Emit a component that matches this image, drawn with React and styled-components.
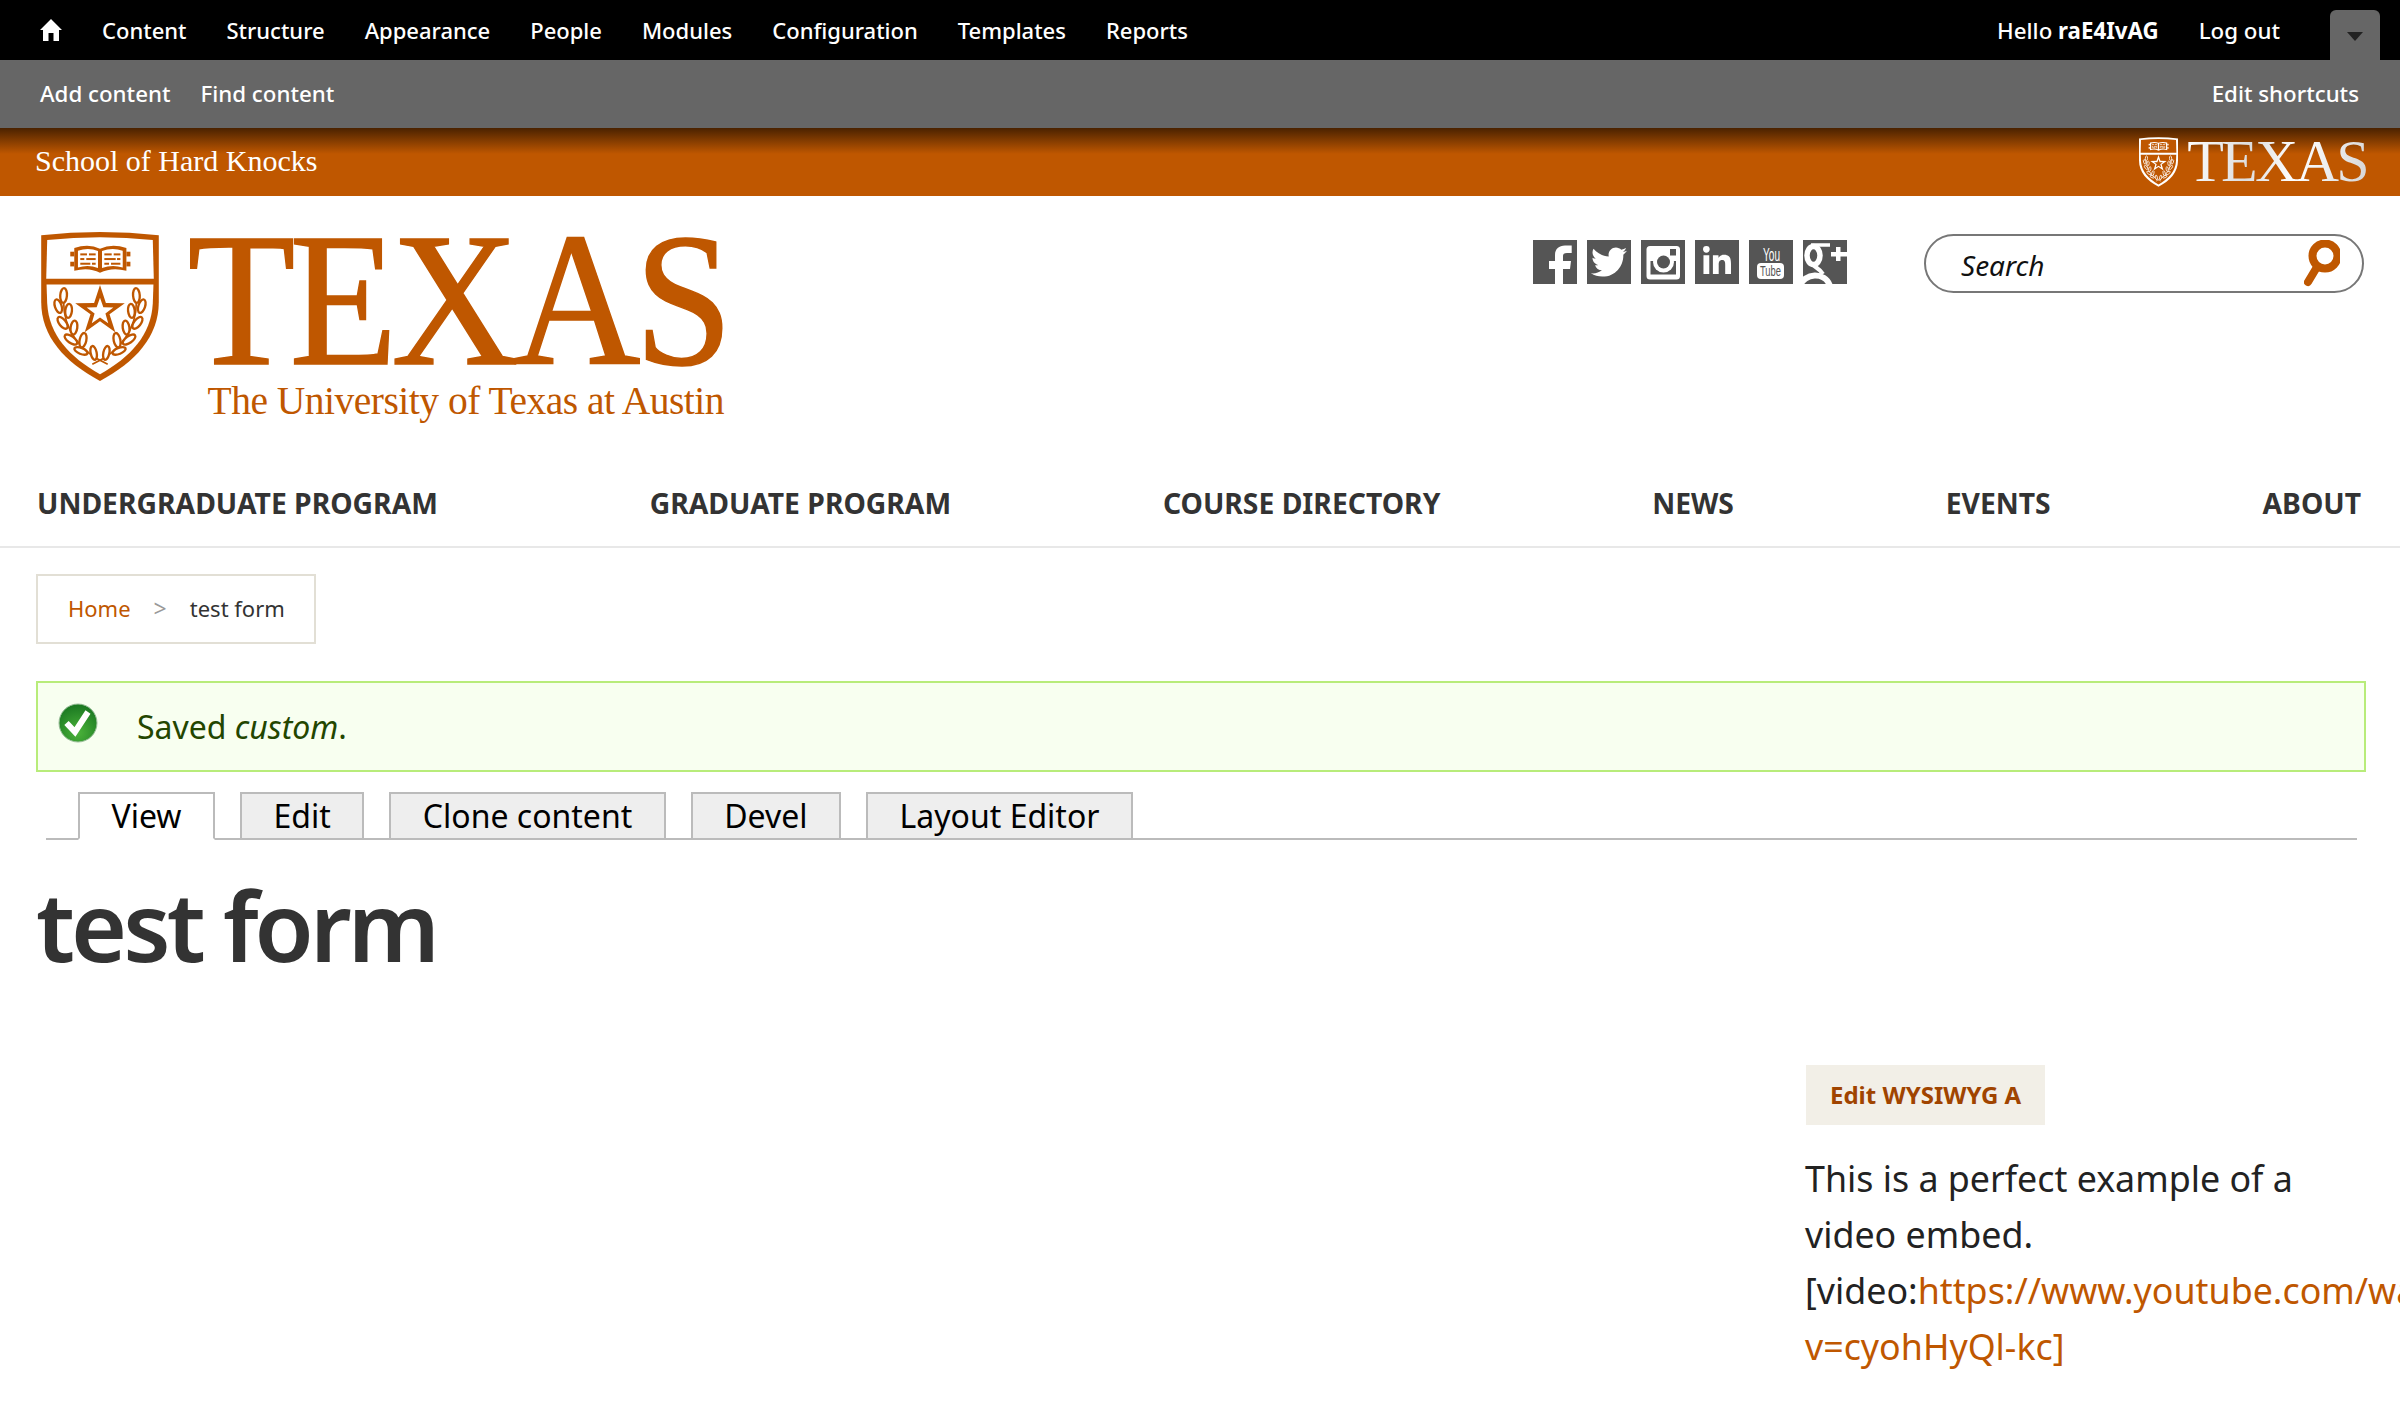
import React from "react";
import styled, { createGlobalStyle } from "styled-components";
import { FaTwitter, FaLinkedinIn } from "react-icons/fa";

const Global = createGlobalStyle`
  html, body { margin: 0; padding: 0; background: #fff; }
  body { font-family: "Noto Sans", "Open Sans", sans-serif; overflow-x: hidden; }
  * { box-sizing: border-box; }
  a { text-decoration: none; color: inherit; }
`;

const Page = styled.div`width: 2400px; height: 1416px; overflow: hidden; background: #fff;`;

const AdminBar = styled.div`
  height: 60px; background: #000; color: #fff; display: flex; align-items: center;
  padding-left: 40px; font-size: 22.3px; font-weight: 500;
`;
const HomeIcon = styled.svg`flex: none;`;
const MenuList = styled.nav`display: flex; align-items: center; gap: 40px; margin-left: 40px; font-size: 22px; padding-bottom: 1px;`;
const BarRight = styled.div`margin-left: auto; display: flex; align-items: center; height: 100%;`;
const Hello = styled.span`margin-right: 40px; b { font-weight: 700; }`;
const Handle = styled.div`
  width: 50px; height: 50px; margin: 10px 20px 0 50px; background: #666; border-radius: 6px 6px 0 0;
  display: flex; justify-content: center; padding-top: 22px;
  &::after { content: ""; border: 8px solid transparent; border-top: 9px solid #222; border-bottom: 0; height: 0; width: 0; }
`;
const ShortcutBar = styled.div`
  height: 68px; background: #666; color: #fff; display: flex; align-items: center; justify-content: space-between;
  padding: 0 41px 2px 40px; font-size: 22.3px; font-weight: 500;
`;
const ShortcutList = styled.div`display: flex; gap: 30px;`;
const BrandBar = styled.div`
  height: 68px; background: linear-gradient(180deg, #4a2200 0, #bf5700 26px); display: flex; align-items: center;
  justify-content: space-between; padding: 0 33px 3px 35px; color: #fff;
  font-family: "Liberation Serif", serif; font-size: 30px;
`;
const MiniLogo = styled.div`display: flex; align-items: center; gap: 9px; height: 100%; padding-top: 3px;`;
const MiniWord = styled.span`
  font-size: 60px; line-height: 1; letter-spacing: -2.7px; padding-bottom: 2px;
  background: linear-gradient(100deg, #fff 0, #ddd 35%, #fff 60%, #d5d5d5 100%);
  -webkit-background-clip: text; background-clip: text; color: transparent;
`;

const Masthead = styled.header`
  height: 252px; padding: 36px 36px 0 41px; display: flex; justify-content: space-between; align-items: flex-start;
`;
const Logo = styled.div`display: flex; gap: 30px; color: #bf5700; font-family: "Liberation Serif", serif;`;
const LogoText = styled.div`display: flex; flex-direction: column; align-items: flex-end; width: 537px;`;
const LogoWord = styled.div`
  font-size: 190px; line-height: 150px; height: 150px; letter-spacing: -6.5px; margin-top: -7px; margin-right: -1px; white-space: nowrap;
  -webkit-text-stroke: 1.5px #bf5700; transform: scaleX(0.93); transform-origin: right center;
`;
const LogoTag = styled.div`font-size: 39.5px; line-height: 40px; margin-top: 6px; margin-right: 2px; white-space: nowrap; letter-spacing: -0.5px;`;
const Tools = styled.div`display: flex; gap: 77px; align-items: flex-start; margin-top: 2px;`;
const SocialRow = styled.div`display: flex; gap: 10px; margin-top: 6px;`;
const SocialTile = styled.a`
  width: 44px; height: 44px; background: #555; color: #fff; display: flex; align-items: center; justify-content: center; overflow: hidden;
`;
const SearchBox = styled.div`
  width: 440px; height: 59px; border: 2px solid #777; border-radius: 30px; display: flex; align-items: center;
  justify-content: space-between; padding: 0 22px 0 35px; font-style: italic; font-size: 28px; color: #111; line-height: 60px;
  span { padding-top: 2px; }
`;

const MainNav = styled.nav`
  height: 100px; padding: 11px 39px 0 37px; display: flex; align-items: center; justify-content: space-between;
  border-bottom: 2px solid #e8e8e8; font-weight: 700; font-size: 28.3px; color: #333;
`;

const Content = styled.main`padding: 26px 34px 0 36px;`;
const Crumbs = styled.div`
  width: 280px; height: 70px; border: 2px solid #e2dfd5; display: flex; align-items: center; padding: 0 0 2px 30px; font-size: 22px; color: #333;
`;
const CrumbLink = styled.a`color: #bf5700;`;
const CrumbSep = styled.span`color: #999; margin: 0 23px 0 23px; font-size: 23px;`;
const Notice = styled.div`
  height: 91px; margin-top: 37px; background: #f8fff0; border: 2px solid #b8ec7a; display: flex; align-items: center;
  padding-left: 20px; gap: 39px; color: #234600; font-size: 32px;
`;
const NoticeIcon = styled.svg`flex: none; margin-bottom: 7px;`;
const TabRow = styled.div`
  margin: 20px 9px 0 10px; height: 48px; border-bottom: 2px solid #bbb; padding-left: 32px; display: flex; gap: 25px;
`;
const Tab = styled.a`
  height: 48px; padding: 0 31.5px; border: 2px solid #bbb; font-size: 32px; line-height: 44px; color: #000;
  background: ${(p) => (p.$active ? "#fff" : "#eee")};
  border-bottom-color: ${(p) => (p.$active ? "#fff" : "#bbb")};
`;
const Title = styled.h1`
  margin: 29px 0 0 0; font-size: 96px; line-height: 112px; font-weight: 600; color: #333; letter-spacing: -3.9px;
`;
const Lower = styled.div`display: flex; justify-content: flex-end; margin-top: 84px;`;
const Aside = styled.aside`width: 560px;`;
const EditButton = styled.a`
  display: inline-flex; align-items: center; height: 60px; padding: 0 24px 2px; background: #f2efe7; color: #a04400;
  font-weight: 700; font-size: 24px;
`;
const Body = styled.p`margin: 25px 0 0 -1px; font-size: 35.8px; line-height: 56px; color: #222; width: 560px;`;
const BodyLink = styled.a`color: #bf5700;`;

const ORANGE = "#bf5700";

function starPoints(cx, cy, R, r) {
  const pts = [];
  for (let i = 0; i < 10; i++) {
    const rad = i % 2 ? r : R;
    const a = (-90 + i * 36) * (Math.PI / 180);
    pts.push(`${(cx + rad * Math.cos(a)).toFixed(1)},${(cy + rad * Math.sin(a)).toFixed(1)}`);
  }
  return pts.join(" ");
}

const LEAVES = [
  [100, 226, 4, 10, 22], [84, 258, -18, 10, 21], [115, 272, 6, 10, 21], [97, 308, -38, 10, 21],
  [131, 322, 8, 10, 21], [122, 358, -55, 10, 22], [158, 360, 12, 10, 22], [152, 392, -68, 9, 21], [190, 398, -12, 9, 21],
];

function Shield({ color, bg, width, height }) {
  const leaves = (
    <g>
      <path d="M100 245 C100 330 150 395 232 432" fill="none" stroke={color} strokeWidth="5" />
      {LEAVES.map(([x, y, r, rx, ry], i) => (
        <ellipse key={i} cx={x} cy={y} rx={rx} ry={ry} transform={`rotate(${r} ${x} ${y})`} fill={bg} stroke={color} strokeWidth="7" />
      ))}
    </g>
  );
  return (
    <svg width={width} height={height} viewBox="33 36 352 446" aria-hidden="true">
      <path d="M33 46 Q209 26 385 46 L385 245 C385 350 315 425 209 482 C103 425 33 350 33 245 Z" fill={color} />
      <path d="M51 60 Q209 44 367 60 L370 176 L48 176 Z" fill={bg} />
      <path d="M49 193 L369 193 L367 250 C362 345 300 410 209 462 C118 410 56 345 51 250 Z" fill={bg} />
      <g fill={color}>
        <rect x="120" y="95" width="12" height="14" />
        <rect x="120" y="125" width="12" height="14" />
        <rect x="288" y="95" width="12" height="14" />
        <rect x="288" y="125" width="12" height="14" />
      </g>
      <path d="M132 84 Q175 70 209 86 Q245 70 288 84 L288 152 Q245 140 209 158 Q175 140 132 152 Z" fill={color} />
      <path d="M143 92 Q175 82 203 93 L203 144 Q175 132 143 142 Z" fill={bg} />
      <path d="M215 93 Q245 82 277 92 L277 142 Q245 132 215 144 Z" fill={bg} />
      <g fill={color}>
        <rect x="150" y="100" width="20" height="6" /><rect x="176" y="100" width="20" height="6" />
        <rect x="150" y="114" width="12" height="6" /><rect x="168" y="114" width="28" height="6" />
        <rect x="150" y="128" width="30" height="6" /><rect x="185" y="128" width="11" height="6" />
        <rect x="222" y="100" width="22" height="6" /><rect x="250" y="100" width="20" height="6" />
        <rect x="222" y="114" width="34" height="6" /><rect x="260" y="114" width="10" height="6" />
        <rect x="222" y="128" width="14" height="6" /><rect x="242" y="128" width="28" height="6" />
      </g>
      <polygon points={starPoints(209, 273, 78, 30)} fill={color} />
      <polygon points={starPoints(209, 275, 42, 17)} fill={bg} />
      {leaves}
      <g transform="translate(418 0) scale(-1 1)">{leaves}</g>
    </svg>
  );
}

const FacebookIcon = () => (
  <svg width="44" height="44" viewBox="0 0 44 44" aria-hidden="true">
    <path fill="#fff" d="M22 44 V29 H16 V21 H22 V15 C22 9 26 5.5 32 5.5 H38.7 V13 H34 C31 13 30 14 30 16 V21 H38 L37 29 H30 V44 Z" />
  </svg>
);
const InstagramIcon = () => (
  <svg width="44" height="44" viewBox="0 0 44 44" aria-hidden="true">
    <rect x="5.5" y="6" width="33.5" height="33.5" rx="3.5" fill="#fff" />
    <rect x="9.5" y="21" width="25.5" height="13.5" fill="#555" />
    <circle cx="22.5" cy="22" r="10.5" fill="#fff" />
    <circle cx="22.5" cy="22" r="6.5" fill="#555" />
    <rect x="29" y="9" width="6" height="6.5" fill="#555" />
  </svg>
);
const YouTubeIcon = () => (
  <svg width="44" height="44" viewBox="0 0 44 44" aria-hidden="true">
    <text x="22.5" y="21" textAnchor="middle" fontFamily="'Liberation Sans', sans-serif" fontSize="19" fontWeight="400" fill="#fff" textLength="17" lengthAdjust="spacingAndGlyphs">You</text>
    <rect x="8" y="23" width="27" height="16" rx="4" fill="#fff" />
    <text x="21.5" y="36" textAnchor="middle" fontFamily="'Liberation Sans', sans-serif" fontSize="15" fontWeight="400" fill="#555" textLength="21" lengthAdjust="spacingAndGlyphs">Tube</text>
  </svg>
);
const GooglePlusIcon = () => (
  <svg width="44" height="44" viewBox="0 0 44 44" aria-hidden="true">
    <g fill="none" stroke="#fff">
      <ellipse cx="10.5" cy="15.5" rx="6.5" ry="9" strokeWidth="5.5" />
      <path d="M8 5 H27" strokeWidth="3.5" />
      <path d="M10 25 C13 28 17 29 20 34" strokeWidth="4" />
      <path d="M-3 46 C1 33 22 31 27 46" strokeWidth="6" />
    </g>
    <path d="M33 7 H37.5 V12 H44 V16.5 H37.5 V21 H33 V16.5 H28 V12 H33 Z" fill="#fff" />
  </svg>
);
const SearchIcon = () => (
  <svg width="36" height="48" viewBox="0 0 36 48" aria-hidden="true">
    <circle cx="21" cy="16" r="12.5" fill="none" stroke={ORANGE} strokeWidth="8" />
    <line x1="13" y1="27" x2="4" y2="42" stroke={ORANGE} strokeWidth="8" strokeLinecap="round" />
  </svg>
);
const CheckIcon = () => (
  <NoticeIcon width="40" height="40" viewBox="0 0 40 40" aria-hidden="true">
    <defs>
      <radialGradient id="ok" cx="50%" cy="75%" r="70%">
        <stop offset="0" stopColor="#4bb33a" />
        <stop offset="1" stopColor="#1c7a22" />
      </radialGradient>
    </defs>
    <circle cx="20" cy="20" r="19" fill="url(#ok)" stroke="#9bbf9b" strokeWidth="1" />
    <path d="M8.5 20 L17 29 L30 9" fill="none" stroke="#fff" strokeWidth="6" />
  </NoticeIcon>
);

const TOP_MENU = ["Content", "Structure", "Appearance", "People", "Modules", "Configuration", "Templates", "Reports"];
const NAV = ["UNDERGRADUATE PROGRAM", "GRADUATE PROGRAM", "COURSE DIRECTORY", "NEWS", "EVENTS", "ABOUT"];
const TABS = ["View", "Edit", "Clone content", "Devel", "Layout Editor"];

export default function App() {
  return (
    <Page>
      <Global />
      <AdminBar>
        <HomeIcon width="22" height="22" viewBox="0 0 22 22" aria-hidden="true">
          <path fill="#fff" d="M11 0 L22 11 H19 V22 H13.5 V14 H8.5 V22 H3 V11 H0 Z" />
        </HomeIcon>
        <MenuList>{TOP_MENU.map((m) => <a key={m}>{m}</a>)}</MenuList>
        <BarRight>
          <Hello>Hello <b>raE4IvAG</b></Hello>
          <a>Log out</a>
          <Handle />
        </BarRight>
      </AdminBar>
      <ShortcutBar>
        <ShortcutList><a>Add content</a><a>Find content</a></ShortcutList>
        <a>Edit shortcuts</a>
      </ShortcutBar>
      <BrandBar>
        <span>School of Hard Knocks</span>
        <MiniLogo>
          <Shield color="#fff" bg="#bf5700" width={39} height={50} />
          <MiniWord>TEXAS</MiniWord>
        </MiniLogo>
      </BrandBar>
      <Masthead>
        <Logo>
          <Shield color={ORANGE} bg="#fff" width={118} height={149} />
          <LogoText>
            <LogoWord>TEXAS</LogoWord>
            <LogoTag>The University of Texas at Austin</LogoTag>
          </LogoText>
        </Logo>
        <Tools>
          <SocialRow>
            <SocialTile><FacebookIcon /></SocialTile>
            <SocialTile><FaTwitter size={36} /></SocialTile>
            <SocialTile><InstagramIcon /></SocialTile>
            <SocialTile><FaLinkedinIn size={32} /></SocialTile>
            <SocialTile><YouTubeIcon /></SocialTile>
            <SocialTile><GooglePlusIcon /></SocialTile>
          </SocialRow>
          <SearchBox><span>Search</span><SearchIcon /></SearchBox>
        </Tools>
      </Masthead>
      <MainNav>{NAV.map((n) => <a key={n}>{n}</a>)}</MainNav>
      <Content>
        <Crumbs><CrumbLink>Home</CrumbLink><CrumbSep>&gt;</CrumbSep>test form</Crumbs>
        <Notice><CheckIcon /><span>Saved <em>custom</em>.</span></Notice>
        <TabRow>{TABS.map((t, i) => <Tab key={t} $active={i === 0}>{t}</Tab>)}</TabRow>
        <Title>test form</Title>
        <Lower>
          <Aside>
            <EditButton>Edit WYSIWYG A</EditButton>
            <Body>
              This is a perfect example of a video embed. [video:<BodyLink>https://www.youtube.com/watch?v=cyohHyQl-kc]</BodyLink>
            </Body>
          </Aside>
        </Lower>
      </Content>
    </Page>
  );
}
